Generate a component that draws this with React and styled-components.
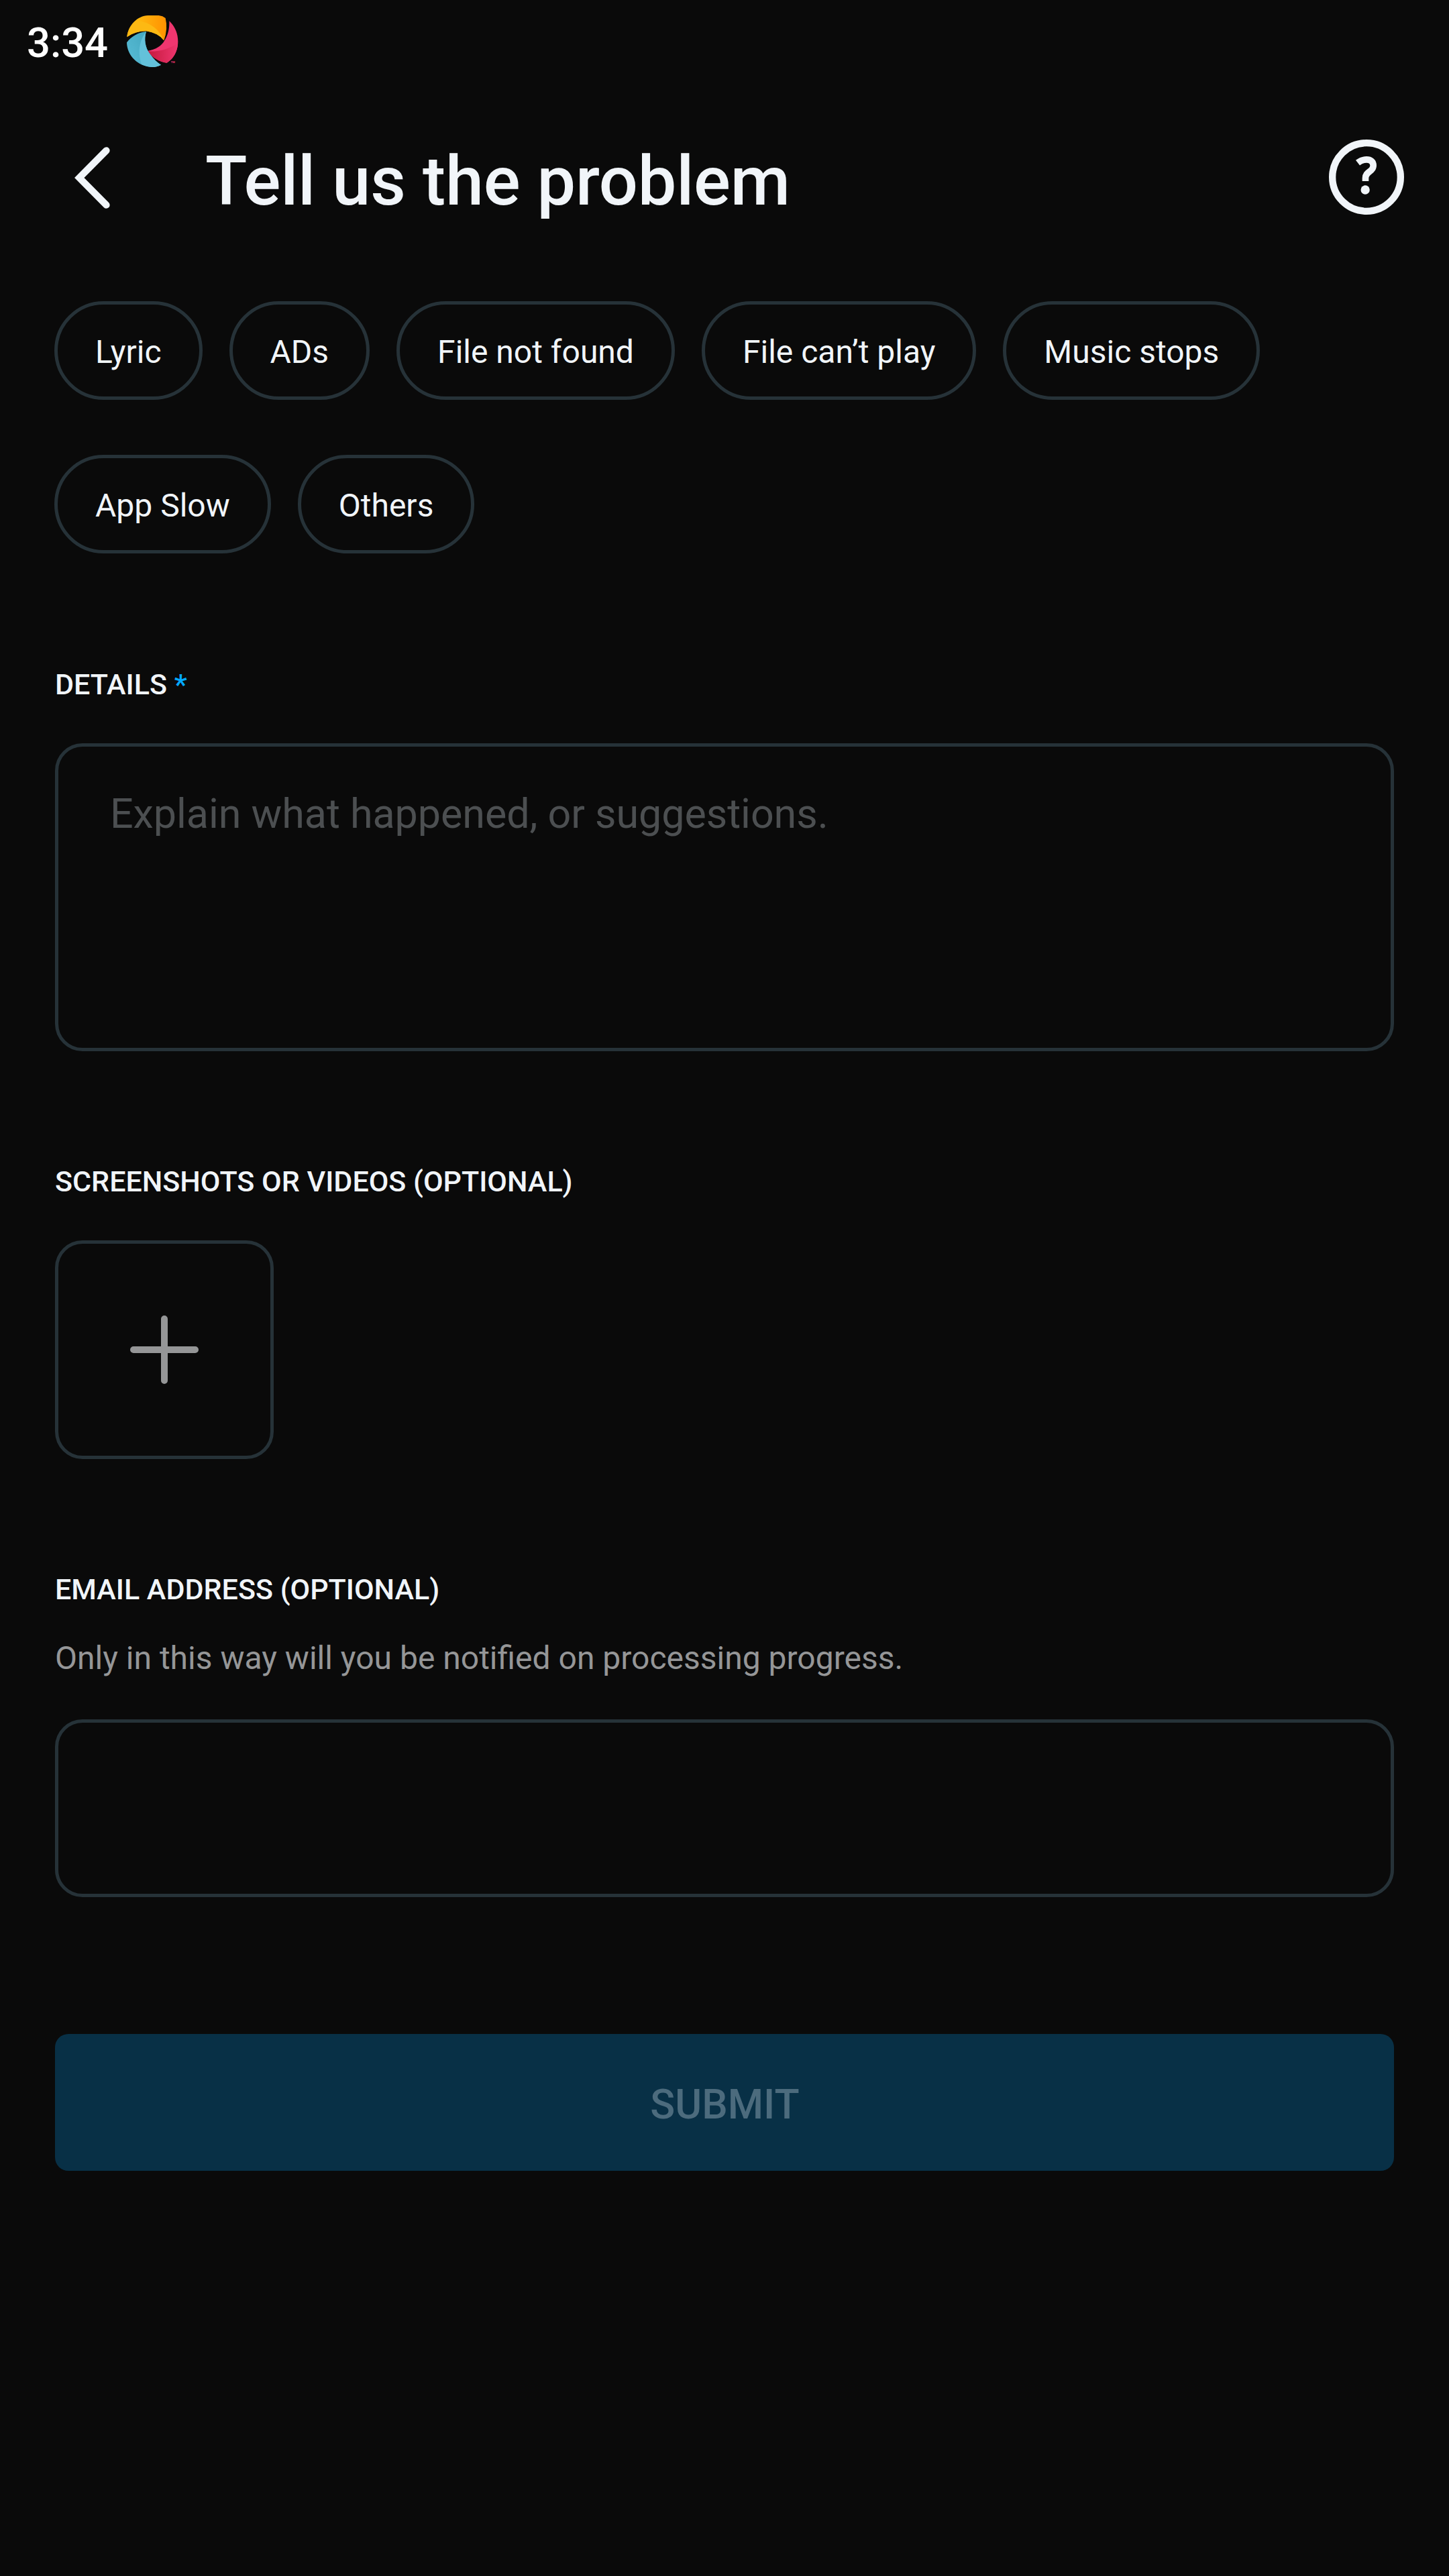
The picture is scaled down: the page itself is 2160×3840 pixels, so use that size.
import React from "react";
import styled, { createGlobalStyle } from "styled-components";

const GlobalStyle = createGlobalStyle`
  *, *::before, *::after { box-sizing: border-box; }
  body { margin: 0; background: #0a0a0a; }
`;

const Screen = styled.main`
  min-height: 3840px;
  background: #0a0a0a;
  color: #f1f5f9;
  font-family: Roboto, "Liberation Sans", sans-serif;
`;

const StatusBar = styled.div`
  display: flex;
  align-items: center;
  gap: 27px;
  height: 123px;
  padding-left: 40px;
`;

const Clock = styled.span`
  font-size: 61.5px;
  line-height: 72px;
  font-weight: 500;
  color: #fff;
  padding-top: 4px;
`;

const Header = styled.header`
  display: flex;
  align-items: center;
  height: 282px;
  padding: 0 67px 0 82px;
`;

const IconButton = styled.button`
  display: flex;
  padding: 0;
  border: 0;
  background: none;
  color: inherit;
`;

const Title = styled.h1`
  flex: 1;
  margin: 0;
  padding: 12px 0 0 115px;
  font-size: 102.5px;
  line-height: 120px;
  font-weight: 500;
  letter-spacing: -0.2px;
`;

const Form = styled.form`
  display: flex;
  flex-direction: column;
  padding: 44px 82px 0;
`;

const Chips = styled.div`
  display: flex;
  flex-wrap: wrap;
  gap: 82px 40px;
  margin-left: -1px;
`;

const Chip = styled.button`
  height: 147px;
  padding: 5px 56px 0;
  border: 5px solid #263238;
  border-radius: 74px;
  background: none;
  color: inherit;
  font: 400 48px/60px Roboto, sans-serif;
  white-space: nowrap;
`;

const Section = styled.section`
  display: flex;
  flex-direction: column;
  align-items: flex-start;
  margin-top: ${(p) => p.$top}px;
`;

const Label = styled.label`
  font-size: 43px;
  line-height: 60px;
  font-weight: 500;
`;

const Required = styled.span`
  color: #03a9ff;
`;

const Hint = styled.p`
  margin: 43px 0 0;
  font-size: 48px;
  line-height: 60px;
  color: #959697;
`;

const DetailsField = styled.textarea`
  width: 100%;
  height: 459px;
  margin-top: 58px;
  padding: 64px 77px;
  border: 5px solid #263238;
  border-radius: 41px;
  background: none;
  color: inherit;
  font: 400 61px/72px Roboto, sans-serif;
  letter-spacing: -0.05px;
  resize: none;
  &::placeholder { color: #4c4f51; opacity: 1; }
`;

const AddButton = styled.button`
  display: flex;
  align-items: center;
  justify-content: center;
  width: 326px;
  height: 326px;
  margin-top: 58px;
  padding: 0;
  border: 5px solid #263238;
  border-radius: 41px;
  background: none;
  color: #959697;
`;

const EmailField = styled.input`
  width: 100%;
  height: 265px;
  margin-top: 61px;
  padding: 0 77px;
  border: 5px solid #263238;
  border-radius: 41px;
  background: none;
  color: inherit;
  font: 400 61px/72px Roboto, sans-serif;
`;

const Submit = styled.button`
  height: 204px;
  margin-top: 204px;
  padding: 5px 0 0 1px;
  border: 0;
  border-radius: 20px;
  background: #083046;
  color: #4c6b7d;
  font: 500 61px/72px Roboto, sans-serif;
`;

const Logo = () => (
  <svg width="79" height="79" viewBox="566 66 237 237">
    <defs>
      <linearGradient id="amber" x1="0.3" x2="1">
        <stop offset="0" stopColor="#ffb70f" />
        <stop offset="1" stopColor="#ff9100" />
      </linearGradient>
      <linearGradient id="crimson" x1="0" x2="1">
        <stop offset="0" stopColor="#c3193c" />
        <stop offset="1" stopColor="#ef366f" />
      </linearGradient>
      <linearGradient id="teal" x1="1" x2="0" y1="0" y2="0.6">
        <stop offset="0" stopColor="#3c9fb8" />
        <stop offset="1" stopColor="#55b9d2" />
      </linearGradient>
    </defs>
    <path fill="url(#amber)" d="M570 165C575 112 618 70 664 69H712Q730 71 742 81Q754 130 735 181Q712 148 657 139Q610 138 570 165Z" />
    <path fill="#fdb913" d="M570 165C574 132 590 107 614 92C672 98 715 130 735 181Q712 148 657 139Q610 138 570 165Z" />
    <path fill="#ef366f" d="M759 94C785 118 798 150 798 185C798 225 780 262 748 281C715 277 685 258 660 228C700 222 725 205 738 181C755 155 760 125 759 94Z" />
    <path fill="url(#crimson)" d="M660 228C705 235 755 220 797 194C796 228 778 263 748 281C715 277 683 258 660 228Z" />
    <path fill="url(#teal)" d="M656 141C645 175 651 212 672 241C690 265 705 280 722 290C710 297 695 300 683 300C620 298 570 250 569 190C590 162 620 145 656 141Z" />
    <path fill="#63c1da" d="M656 141C645 175 651 212 672 241C690 265 705 280 722 290C710 297 695 300 683 300Q660 300 636 289C615 232 627 178 656 141Z" />
    <text x="766" y="281" fill="#ef366f" fontSize="12" fontWeight="700" fontFamily="Roboto, sans-serif">TM</text>
  </svg>
);

const BackIcon = () => (
  <svg width="109" height="112" viewBox="82 208 109 112" fill="none" stroke="currentColor" strokeWidth="10.3" strokeLinecap="round">
    <path d="M158.5 224.3L118.3 265L158.5 305.7" />
  </svg>
);

const HelpIcon = () => (
  <svg width="112" height="112" viewBox="123 84 336 336" fill="none" stroke="currentColor">
    <circle cx="291" cy="252" r="152.5" strokeWidth="31" />
    <path strokeWidth="29" d="M252 188C266 177 278 173.5 291 173.5C310 173.5 321.5 183 321.5 200C321.5 230 286 226 286.5 257V270" />
    <circle cx="285.5" cy="309" r="20" fill="currentColor" stroke="none" />
  </svg>
);

const PlusIcon = () => (
  <svg width="102" height="102" viewBox="0 0 102 102" fill="none" stroke="currentColor" strokeWidth="10" strokeLinecap="round">
    <path d="M51 5V97M5 51H97" />
  </svg>
);

const topics = ["Lyric", "ADs", "File not found", "File can’t play", "Music stops", "App Slow", "Others"];

export default function App() {
  return (
    <Screen>
      <GlobalStyle />
      <StatusBar>
        <Clock>3:34</Clock>
        <Logo />
      </StatusBar>
      <Header>
        <IconButton type="button" aria-label="Back"><BackIcon /></IconButton>
        <Title>Tell us the problem</Title>
        <IconButton type="button" aria-label="Help"><HelpIcon /></IconButton>
      </Header>
      <Form>
        <Chips>
          {topics.map((topic) => <Chip type="button" key={topic}>{topic}</Chip>)}
        </Chips>
        <Section $top={165}>
          <Label htmlFor="details">DETAILS <Required>*</Required></Label>
          <DetailsField id="details" placeholder="Explain what happened, or suggestions." />
        </Section>
        <Section $top={164}>
          <Label as="div">SCREENSHOTS OR VIDEOS (OPTIONAL)</Label>
          <AddButton type="button" aria-label="Add"><PlusIcon /></AddButton>
        </Section>
        <Section $top={164}>
          <Label htmlFor="email">EMAIL ADDRESS (OPTIONAL)</Label>
          <Hint>Only in this way will you be notified on processing progress.</Hint>
          <EmailField id="email" />
        </Section>
        <Submit type="button">SUBMIT</Submit>
      </Form>
    </Screen>
  );
}
